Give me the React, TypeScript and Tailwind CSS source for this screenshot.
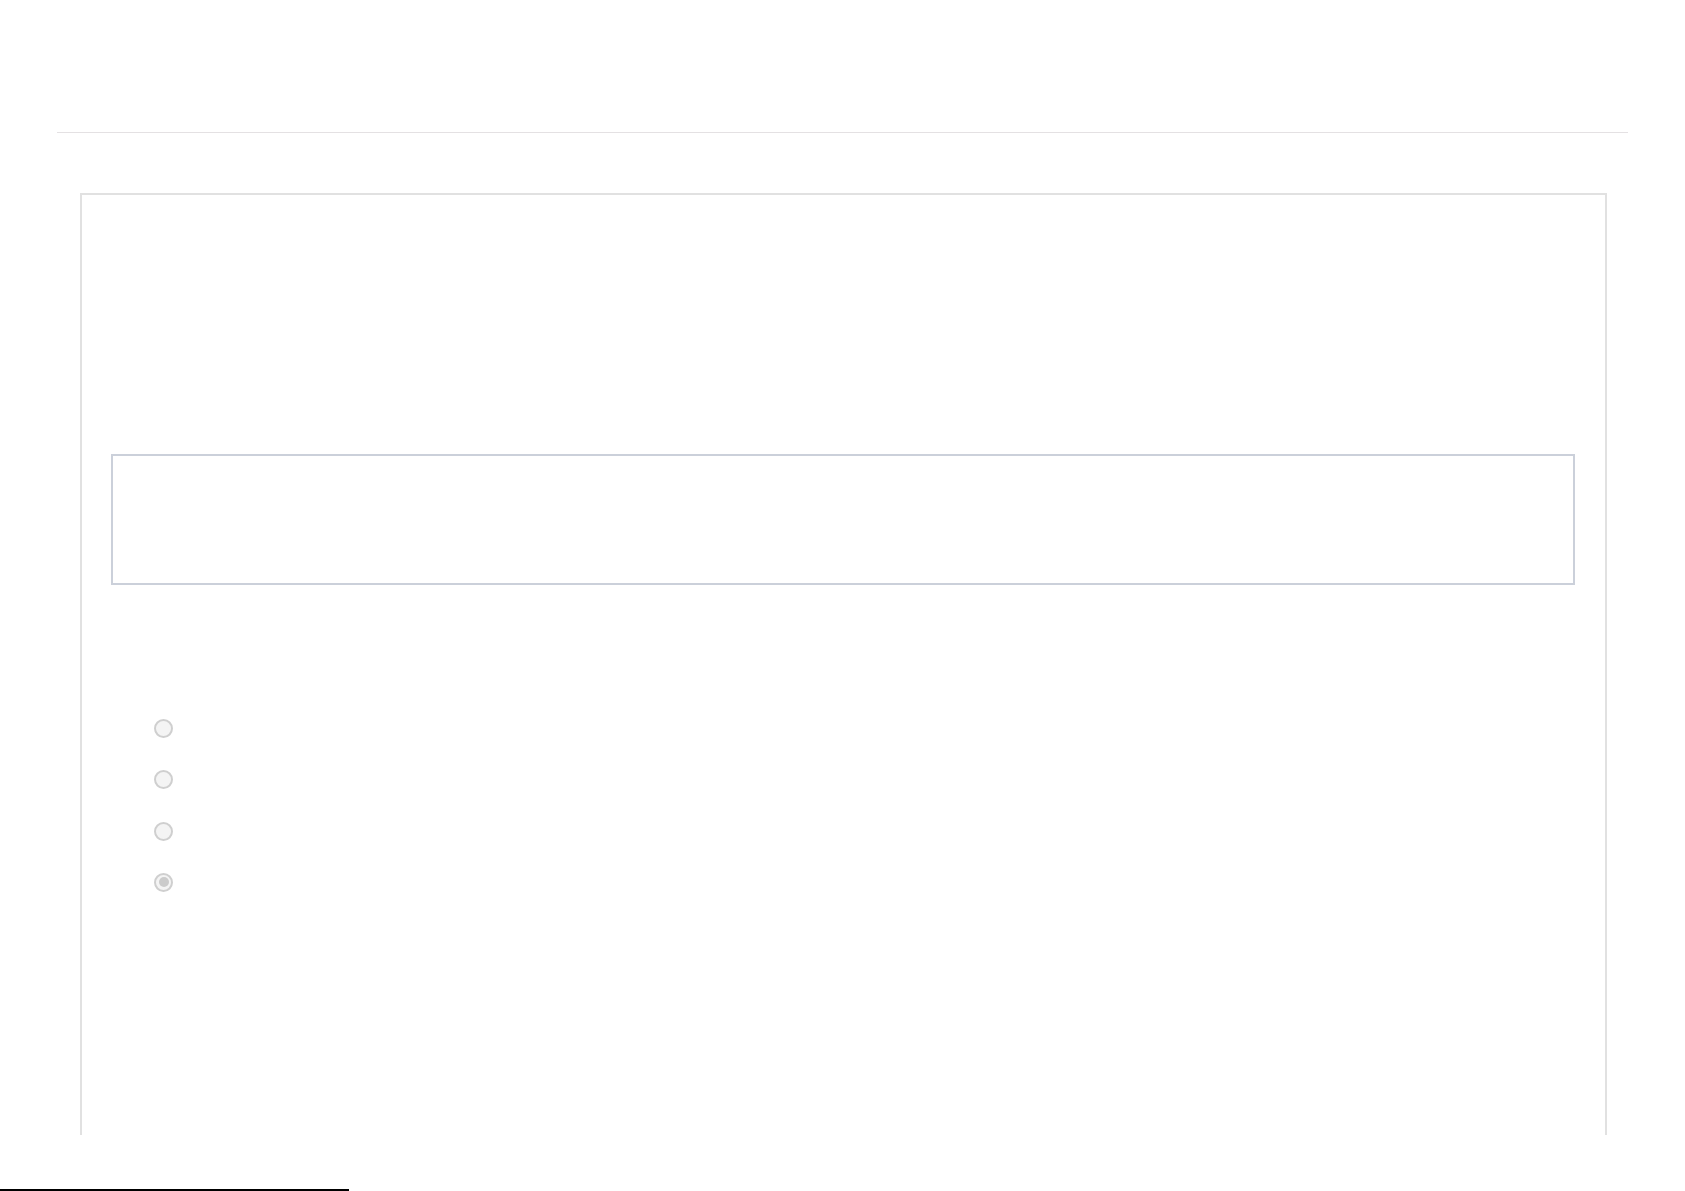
import React from "react";

function Radio({ checked }: { checked?: boolean }) {
  return (
    <div className="w-[19px] h-[19px] rounded-full border-2 border-[#cfcfcf] bg-[#f4f4f4] flex items-center justify-center">
      {checked && <div className="w-[10px] h-[10px] rounded-full bg-[#cbcbcb]" />}
    </div>
  );
}

export default function App() {
  return (
    <div className="w-[1685px] h-[1191px] bg-white flex flex-col overflow-hidden" style={{ fontFamily: '"Liberation Sans", Arial, sans-serif' }}>
      <div className="px-[57px]">
        <div className="h-[133px] border-b border-[#e4e1e3]" />
        <div className="mt-[60px] ml-[23px] mr-[21px] h-[942px] border-2 border-b-0 border-[#e1e1e1] flex flex-col">
          <div className="mt-[259px] ml-[29px] mr-[30px] h-[131px] border-2 border-[#cbd0da]" />
          <div className="mt-[134px] ml-[72px] flex flex-col gap-[32.3px]">
            <Radio />
            <Radio />
            <Radio />
            <Radio checked />
          </div>
        </div>
      </div>
      <div className="mt-auto h-[2px] w-[349px] bg-black" />
    </div>
  );
}
